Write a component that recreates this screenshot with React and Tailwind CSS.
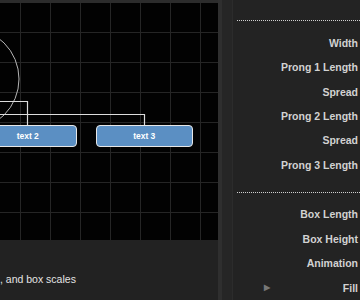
import React from "react";

const rows1 = ["Width", "Prong 1 Length", "Spread", "Prong 2 Length", "Spread", "Prong 3 Length"];
const rows2 = ["Box Length", "Box Height", "Animation"];

function Row({ children }) {
  return (
    <div className="h-[24.5px] flex items-center justify-end pr-[2px] text-[10.5px] font-bold text-[#d2d2d2] leading-none">
      {children}
    </div>
  );
}

function Dotted() {
  return <div className="ml-[4px] border-t border-dotted border-[#d0d0d0]" />;
}

export default function App() {
  const vx = [20.5, 50.5, 80.5, 110.5, 140.5, 170.5, 200.5];
  const hy = [2.5, 32.5, 62.5, 92.5, 122.5, 152.5, 182.5, 212.5];
  return (
    <div
      className="w-[360px] h-[300px] overflow-hidden flex bg-[#232323]"
      style={{ fontFamily: '"Liberation Sans", Arial, sans-serif' }}
    >
      <div className="w-[218px] flex flex-col shrink-0">
        <div className="h-[3px] bg-[#2c2c2c]" />
        <div className="relative h-[237px] bg-[#020202] overflow-hidden">
          <svg className="absolute inset-0" width="218" height="237" viewBox="0 3 218 237">
            {vx.map((x) => (
              <line key={"v" + x} x1={x} y1="0" x2={x} y2="240" stroke="#252525" strokeWidth="1" />
            ))}
            {hy.map((y) => (
              <line key={"h" + y} x1="0" y1={y} x2="218" y2={y} stroke="#252525" strokeWidth="1" />
            ))}
            <circle cx="-32" cy="79" r="51" fill="none" stroke="#b5b5b5" strokeWidth="1" />
            <path d="M0 101.5 H27.5 V125" fill="none" stroke="#dcdcdc" strokeWidth="1.2" />
            <path d="M0 114.5 H144.5 V125" fill="none" stroke="#dcdcdc" strokeWidth="1.2" />
          </svg>
          <div className="absolute left-[-21px] top-[121.7px] w-[97.5px] h-[22.6px] rounded-[4px] border border-[#e6e6e6] bg-[#5b8fc3] flex items-center justify-center text-white font-bold text-[8.5px] leading-none">
            text 2
          </div>
          <div className="absolute left-[95.5px] top-[121.7px] w-[97.5px] h-[22.6px] rounded-[4px] border border-[#e6e6e6] bg-[#5b8fc3] flex items-center justify-center text-white font-bold text-[8.5px] leading-none">
            text 3
          </div>
        </div>
        <div className="h-[60px] bg-[#222222] pt-[32px]">
          <div className="text-[10.5px] leading-[14px] text-[#e4e4e4] whitespace-nowrap">, and box scales</div>
        </div>
      </div>
      <div className="w-[4px] bg-[#2f2f2f] shrink-0" />
      <div className="w-[11px] bg-[#262626] border-r border-[#2c2c2c] shrink-0" />
      <div className="flex-1 flex flex-col pt-[20px]">
        <Dotted />
        <div className="h-[9.75px]" />
        {rows1.map((r, i) => (
          <Row key={i}>{r}</Row>
        ))}
        <div className="h-[14.25px]" />
        <Dotted />
        <div className="h-[9.75px]" />
        {rows2.map((r, i) => (
          <Row key={i}>{r}</Row>
        ))}
        <div className="h-[24.5px] flex items-center pr-[2px] text-[10.5px] font-bold text-[#d2d2d2] leading-none">
          <span className="ml-[31px] text-[8px] text-[#777]">▶</span>
          <span className="ml-auto">Fill</span>
        </div>
      </div>
    </div>
  );
}
